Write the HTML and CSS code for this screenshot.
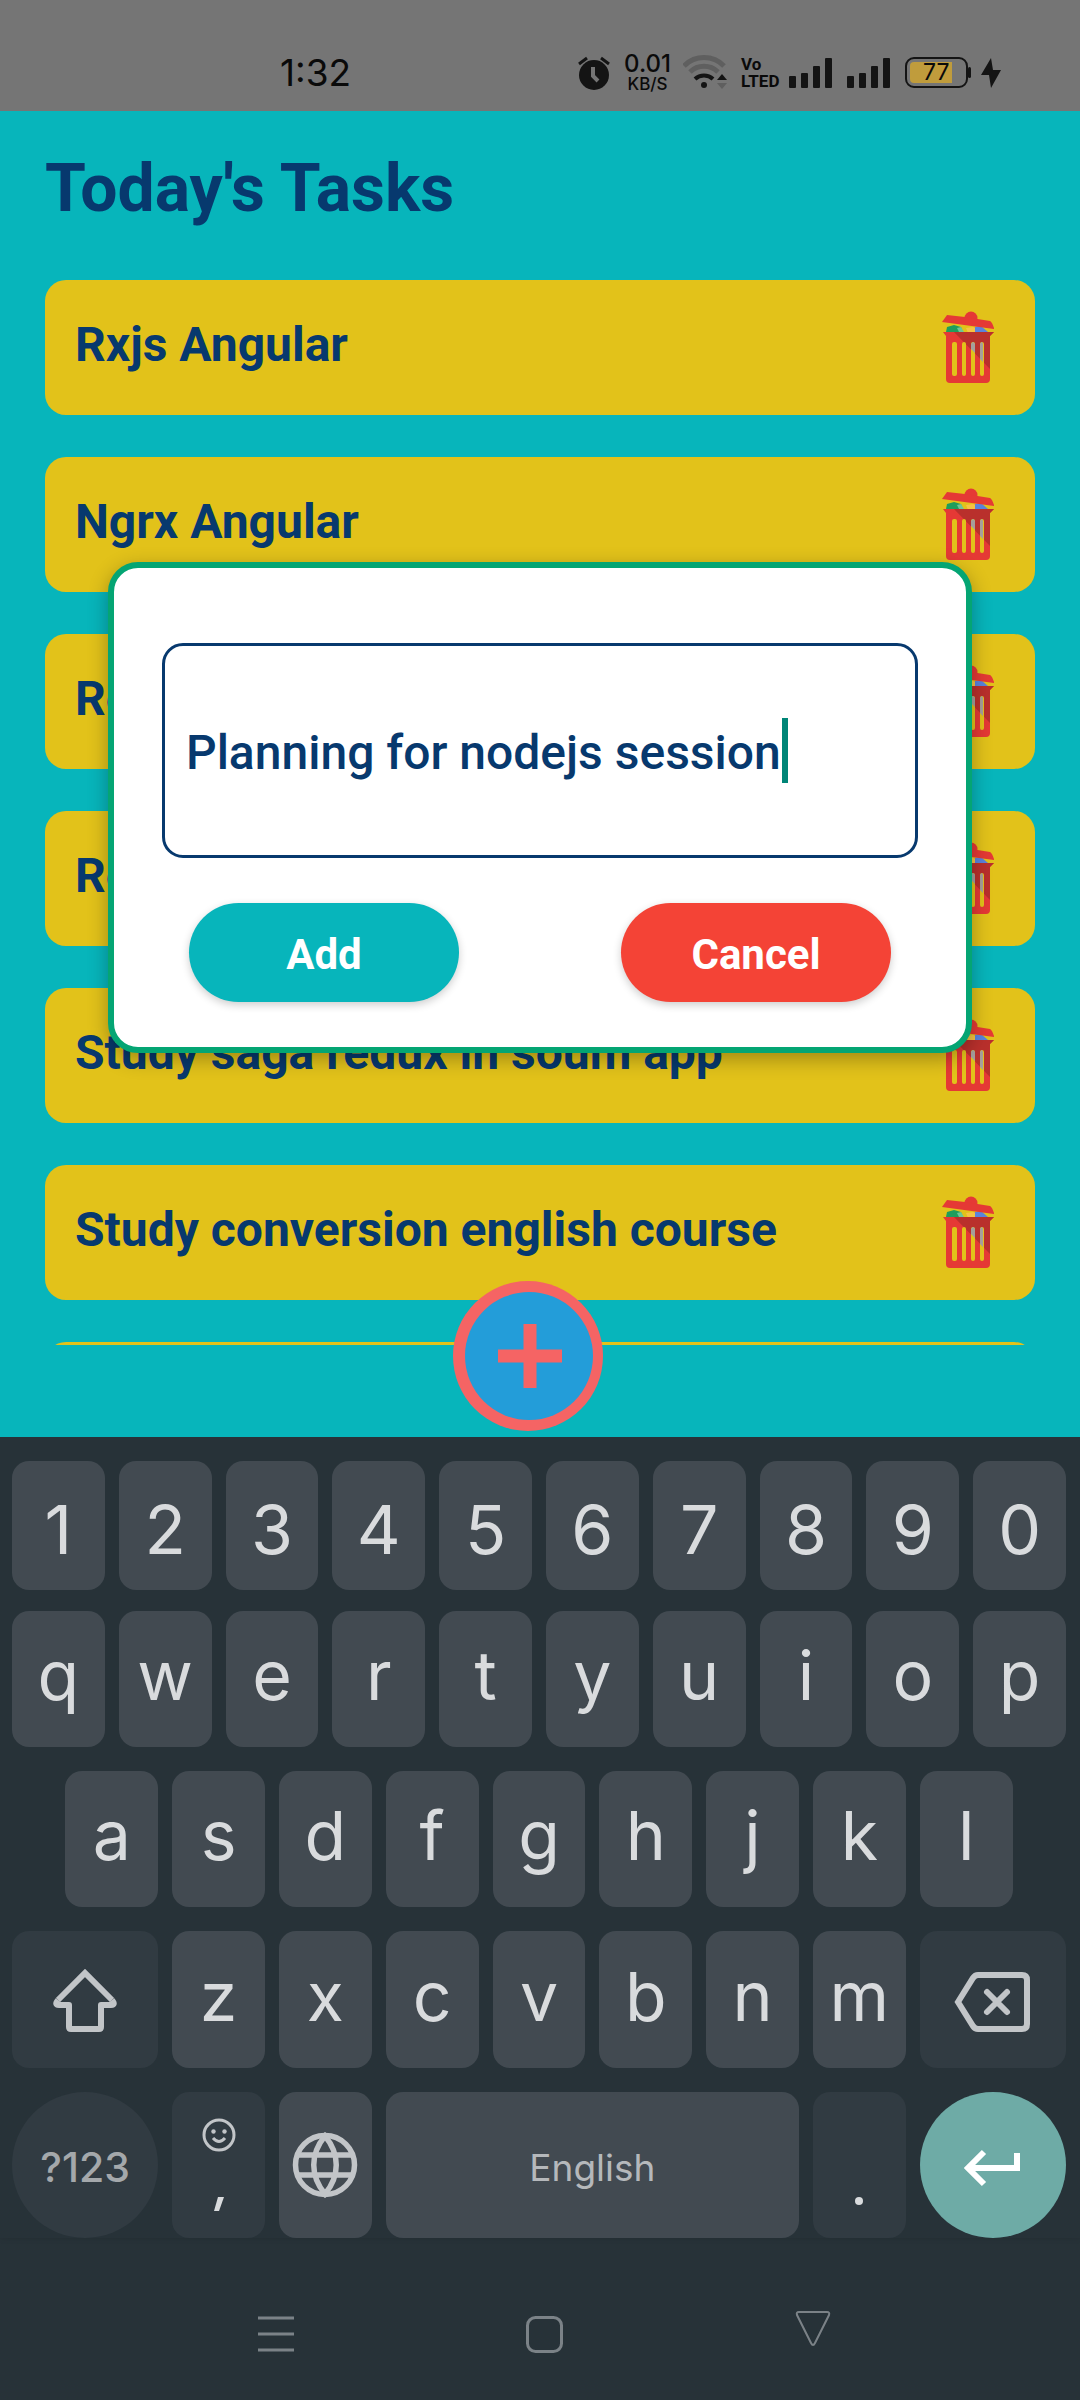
FILE: index.html
```html
<!DOCTYPE html>
<html lang="en">
<head>
<meta charset="utf-8">
<meta name="viewport" content="width=device-width">
<title>Today's Tasks</title>
<link rel="stylesheet" href="styles.css">
</head>
<body>
<svg class="defs" aria-hidden="true">
  <symbol id="trash" viewBox="0 0 54 74">
    <path fill="#1f9d5c" d="M5 22l1-5 7-2 7 2 2 5z"/>
    <path fill="#6fc596" d="M16 18l4-1 3 5h-5z"/>
    <path fill="#f6c244" d="M25 18l7-1 4 2-1 4h-8z"/>
    <path fill="#5b83dc" d="M34 17l6-1 7 6H34z"/>
    <circle cx="30" cy="8" r="6.500" fill="#e53935"/>
    <path fill="#e53935" d="M1 12L6 5l18 2 25 4q2 1 4 7v1z"/>
    <path fill="#e53935" d="M2 22h51l-4 4v43q0 4-4 4H9q-4 0-4-4V26z"/>
    <path fill="#b9302c" d="M13 22h40l-4 4v33z"/>
    <g fill="#e2c21a"><rect x="11" y="32" width="5" height="34" rx="2"/><rect x="21" y="32" width="4" height="34" rx="2"/><rect x="30" y="32" width="4" height="34" rx="2"/><rect x="39" y="32" width="4" height="34" rx="2"/></g>
    <path fill="#a59f9b" d="M30 34q2-4 4 0v9l-4-4zM39 34q2-4 3 0v18l-3-3z"/>
  </symbol>
  <symbol id="bars" viewBox="0 0 44 32">
    <g fill="#141414"><rect x="0" y="19" width="7" height="12" rx="1"/><rect x="12" y="16" width="7" height="15" rx="1"/><rect x="24" y="9" width="7" height="22" rx="1"/><rect x="36" y="1" width="7" height="30" rx="1"/></g>
  </symbol>
</svg>

<header class="status">
  <time class="clock">1:32</time>
  <div class="indicators">
    <svg width="34" height="36" viewBox="0 0 34 36"><circle cx="16" cy="20" r="15" fill="#141414"/><path d="M1 9l8-6M31 9l-8-6" stroke="#141414" stroke-width="3" fill="none"/><path d="M15 12v9l5 5" stroke="#757575" stroke-width="4" fill="none"/></svg>
    <div class="speed"><span>0.01</span><small>KB/S</small></div>
    <svg class="wifi" width="46" height="36" viewBox="0 0 46 36" fill="none"><path d="M1 11a28 28 0 0 1 40 0" stroke="#5f5f5f" stroke-width="5"/><path d="M7 17a20 20 0 0 1 28 0" stroke="#5f5f5f" stroke-width="5"/><path d="M12 24a13 13 0 0 1 18 0" stroke="#141414" stroke-width="4"/><circle cx="21" cy="30" r="3" fill="#141414"/><path d="M34 25l5-6 5 6z" fill="#141414"/><path d="M34 28h10l-5 6z" fill="#5f5f5f"/></svg>
    <div class="volte"><span>Vo</span><span>LTED</span></div>
    <svg class="signal" width="44" height="32"><use href="#bars"/></svg>
    <svg class="signal" width="44" height="32"><use href="#bars"/></svg>
    <div class="battery"><span>77</span></div>
    <svg class="bolt" width="22" height="32" viewBox="0 0 22 32"><path d="M11 1L1 18h8l2 13L21 13h-8z" fill="#141414"/></svg>
  </div>
</header>

<main class="app">
  <h1>Today's Tasks</h1>
  <ul class="tasks">
    <li><span>Rxjs Angular</span><button class="delete" aria-label="Delete"><svg width="54" height="74"><use href="#trash"/></svg></button></li>
    <li><span>Ngrx Angular</span><button class="delete" aria-label="Delete"><svg width="54" height="74"><use href="#trash"/></svg></button></li>
    <li><span>React</span><button class="delete" aria-label="Delete"><svg width="54" height="74"><use href="#trash"/></svg></button></li>
    <li><span>Redux</span><button class="delete" aria-label="Delete"><svg width="54" height="74"><use href="#trash"/></svg></button></li>
    <li><span>Study saga redux in soum app</span><button class="delete" aria-label="Delete"><svg width="54" height="74"><use href="#trash"/></svg></button></li>
    <li><span>Study conversion english course</span><button class="delete" aria-label="Delete"><svg width="54" height="74"><use href="#trash"/></svg></button></li>
    <li></li>
  </ul>
  <button class="fab" aria-label="New task"><svg width="150" height="150" viewBox="0 0 150 150"><circle cx="75" cy="75" r="75" fill="#f56464"/><circle cx="76" cy="75" r="64" fill="#239dd9"/><path d="M77 43v64M45 75h64" stroke="#f56464" stroke-width="13"/></svg></button>
  <form class="dialog" role="dialog" aria-label="Add task">
    <div class="field">
      <input type="text" value="Planning for nodejs session" aria-label="Task">
      <span class="caret"></span>
    </div>
    <div class="actions">
      <button type="button" class="add">Add</button>
      <button type="button" class="cancel">Cancel</button>
    </div>
  </form>
</main>

<section class="keyboard" aria-label="Keyboard">
  <div class="row digits"><button>1</button><button>2</button><button>3</button><button>4</button><button>5</button><button>6</button><button>7</button><button>8</button><button>9</button><button>0</button></div>
  <div class="row"><button>q</button><button>w</button><button>e</button><button>r</button><button>t</button><button>y</button><button>u</button><button>i</button><button>o</button><button>p</button></div>
  <div class="row home"><button>a</button><button>s</button><button>d</button><button>f</button><button>g</button><button>h</button><button>j</button><button>k</button><button>l</button></div>
  <div class="row lower">
    <button class="wide dim" aria-label="Shift"><svg width="72" height="72" viewBox="0 0 72 72" fill="none" stroke="#c2c5c8" stroke-width="6" stroke-linejoin="round"><path stroke-linejoin="miter" d="M9 36L36 9l27 27"/><path d="M9 36q-4 5 1 5h10v22q0 2 2 2h28q2 0 2-2V41h10q5 0 1-5"/></svg></button>
    <button>z</button><button>x</button><button>c</button><button>v</button><button>b</button><button>n</button><button>m</button>
    <button class="wide dim backspace" aria-label="Backspace"><svg width="78" height="62" viewBox="0 0 78 62" fill="none" stroke="#c2c5c8" stroke-width="6"><path d="M5 31L20 7q2-3 5-3h44q5 0 5 5v44q0 5-5 5H25q-3 0-5-3z"/><path d="M34 21l20 20M54 21L34 41" stroke-linecap="round"/></svg></button>
  </div>
  <div class="row bottom">
    <button class="wide dim round symbols">?123</button>
    <button class="dim stacked" aria-label="Emoji, comma"><svg width="34" height="34" viewBox="0 0 34 34" fill="none" stroke="#c2c5c8" stroke-width="3"><circle cx="17" cy="17" r="15"/><path d="M11 20q6 7 12 0"/><circle cx="11.500" cy="13.500" r="2.200" fill="#c2c5c8" stroke="none"/><circle cx="22.500" cy="13.500" r="2.200" fill="#c2c5c8" stroke="none"/></svg><svg width="12" height="16" viewBox="0 0 12 16"><path d="M5 1h6L6 15H1z" fill="#d9dbdd"/></svg></button>
    <button aria-label="Language"><svg width="66" height="66" viewBox="0 0 66 66" fill="none" stroke="#c2c5c8" stroke-width="5.500"><circle cx="33" cy="33" r="29.500"/><path d="M33 4C18 22 18 44 33 62C48 44 48 22 33 4zM6 23h54M6 43h54"/></svg></button>
    <button class="space">English</button>
    <button class="dim period" aria-label="Period"><svg width="8" height="8"><circle cx="4" cy="4" r="4" fill="#d9dbdd"/></svg></button>
    <button class="wide round enter" aria-label="Enter"><svg width="60" height="42" viewBox="0 0 60 42" fill="none" stroke="#fff" stroke-width="6"><path d="M55 6v15H7M22 5L6 21l16 16"/></svg></button>
  </div>
</section>

<nav class="system">
  <button aria-label="Recents"><svg width="40" height="52" viewBox="0 0 40 52"><path d="M2 10h36M2 26h36M2 42h36" stroke="#7b8287" stroke-width="3"/></svg></button>
  <button aria-label="Home"><svg width="40" height="52" viewBox="0 0 40 52" fill="none"><rect x="3.500" y="9.500" width="34" height="34" rx="8" stroke="#7b8287" stroke-width="3"/></svg></button>
  <button aria-label="Back"><svg width="40" height="52" viewBox="0 0 40 52" fill="none"><path d="M7 4h28q3 0 2 3L23 35q-2 4-4 0L5 7q-1-3 2-3z" stroke="#7b8287" stroke-width="2"/></svg></button>
</nav>
</body>
</html>
```
FILE: styles.css
```css
* { box-sizing: border-box; }
body {
  margin: 0;
  min-height: 100vh;
  display: flex;
  flex-direction: column;
  font-family: Roboto, sans-serif;
  background: #273238;
}
button {
  border: 0;
  padding: 0;
  margin: 0;
  background: none;
  font: inherit;
  color: inherit;
}
svg { display: block; }
.defs { position: absolute; width: 0; height: 0; }

/* Status bar */
.status {
  height: 111px;
  padding: 34px 78px 0 280px;
  display: flex;
  align-items: center;
  justify-content: space-between;
  background: #757575;
  color: #0a0a0a;
  font-family: Inter, sans-serif;
}
.clock { font-size: 37px; }
.indicators { display: flex; align-items: center; gap: 12px; }
.speed {
  display: flex;
  flex-direction: column;
  align-items: center;
  font-weight: 500;
  font-size: 24px;
  line-height: 24px;
}
.speed small { font-size: 17px; line-height: 17px; }
.volte {
  display: flex;
  flex-direction: column;
  width: 36px;
  font: 700 17px/17px "Liberation Sans Narrow", Roboto, sans-serif;
}
.signal { margin-right: 2px; }
.battery {
  position: relative;
  width: 63px;
  height: 31px;
  padding: 3px;
  border: 2px solid #141414;
  border-radius: 9px;
}
.battery span {
  display: block;
  width: 42px;
  height: 21px;
  padding-left: 13px;
  border-radius: 4px 0 0 4px;
  background: #c09c3c;
  font-size: 23px;
  line-height: 21px;
}
.battery::after {
  content: "";
  position: absolute;
  right: -5px;
  top: 8px;
  width: 3px;
  height: 11px;
  border-radius: 2px;
  background: #141414;
}

/* Task screen */
.app {
  position: relative;
  flex: 1;
  display: flex;
  flex-direction: column;
  padding: 36px 45px 92px;
  background: #07b5bb;
  color: #07396e;
}
h1 {
  margin: 0 0 49px;
  font-size: 66px;
  line-height: 84px;
  font-weight: 700;
}
.tasks {
  flex: 1 1 0;
  min-height: 0;
  overflow: hidden;
  margin: 0;
  padding: 0;
  list-style: none;
  display: flex;
  flex-direction: column;
  gap: 42px;
}
.tasks li {
  flex: none;
  display: flex;
  justify-content: space-between;
  height: 135px;
  padding: 30px 40px 0 30px;
  border-radius: 21px;
  background: #e2c21a;
  font-size: 48px;
  line-height: 70px;
  font-weight: 700;
}
.delete { height: 74px; }
.fab {
  position: absolute;
  left: calc(50% - 87px);
  bottom: 6px;
  border-radius: 50%;
}

/* Add-task dialog */
.dialog {
  position: absolute;
  top: 451px;
  left: 10%;
  right: 10%;
  padding: 75px 48px 45px;
  border: 6px solid #04a573;
  border-radius: 30px;
  background: #fff;
  box-shadow: 0 6px 20px rgba(0, 0, 0, .3);
}
.field { position: relative; }
.field input {
  display: block;
  width: 100%;
  height: 215px;
  padding: 3px 21px 0;
  border: 3px solid #07396e;
  border-radius: 21px;
  outline: 0;
  background: #fff;
  font: 500 48px/56px Roboto, sans-serif;
  color: #07396e;
}
.caret {
  position: absolute;
  left: 620px;
  top: 75px;
  width: 6px;
  height: 65px;
  background: #008577;
}
.actions {
  display: flex;
  justify-content: space-between;
  margin: 45px 27px 0;
}
.actions button {
  width: 270px;
  height: 99px;
  padding-top: 3px;
  border-radius: 50px;
  box-shadow: 0 3px 8px rgba(0, 0, 0, .2);
  color: #fff;
  font-size: 42px;
  font-weight: 700;
}
.actions .add { background: #07b5bb; }
.actions .cancel { background: #f44336; }

/* Keyboard */
.keyboard {
  display: flex;
  flex-direction: column;
  gap: 24px;
  padding: 24px 14px 0 12px;
  background: #273238;
  box-shadow: 0 -2px 8px rgba(0, 0, 0, .2);
  color: #d9dbdd;
  font-family: Inter, sans-serif;
}
.row {
  display: grid;
  grid-template-columns: repeat(20, minmax(0, 1fr));
  gap: 14px;
}
.row button {
  grid-column: span 2;
  display: flex;
  align-items: center;
  justify-content: center;
  height: 136px;
  padding-bottom: 8px;
  border-radius: 17px;
  background: #424a51;
  font-size: 68px;
}
.digits { margin-bottom: -3px; }
.digits button { height: 129px; padding: 6px 0 0; }
.home button:first-child { grid-column: 2 / span 2; }
.lower button { height: 137px; }
.row .wide { grid-column: span 3; padding: 0; }
.row .dim { background: #313b42; }
.row .backspace { padding: 4px 2px 0 0; }
.bottom button { height: 146px; padding: 0; }
.row .round { border-radius: 50%; }
.row .symbols { padding-top: 3px; color: #a4a8ab; font-size: 41px; font-weight: 500; }
.row .stacked { flex-direction: column; justify-content: space-between; padding: 26px 0; }
.row .space { grid-column: span 8; padding-top: 4px; color: #b5b8bb; font-size: 37px; }
.row .period { align-items: flex-end; padding-bottom: 33px; }
.row .enter { padding: 5px 2px 0 0; background: #6eaba6; }

/* System navigation */
.system {
  display: grid;
  grid-template-columns: repeat(3, 25%);
  justify-content: center;
  justify-items: center;
  align-items: center;
  height: 162px;
  padding: 30px 0 0 8px;
}
```
